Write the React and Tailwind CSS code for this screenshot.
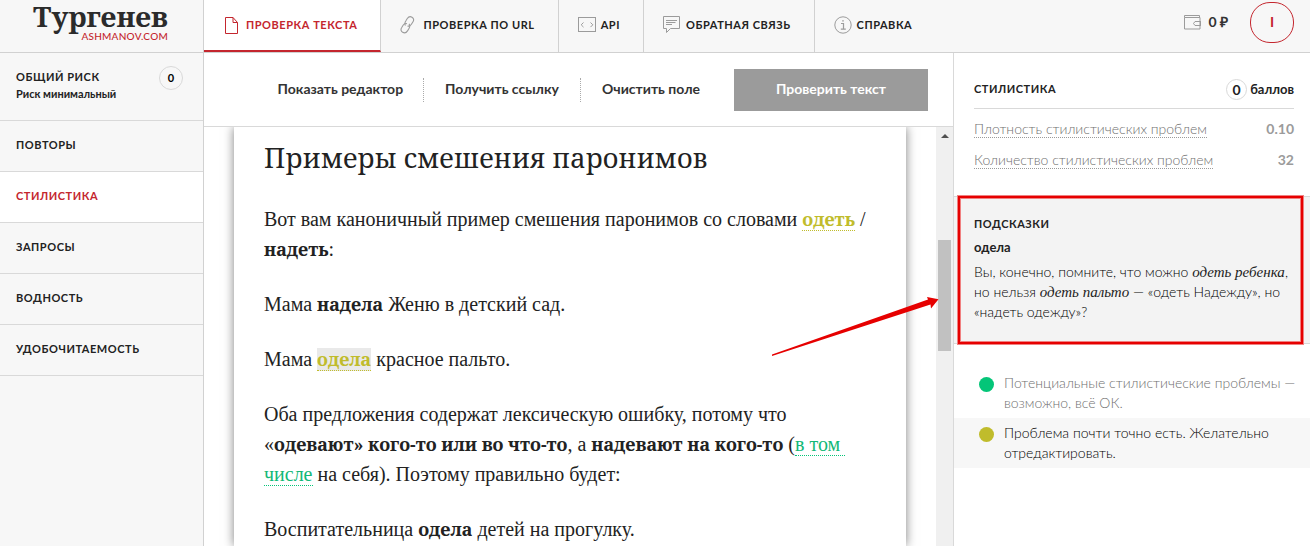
const NAV = [
  { label: 'Проверка текста', icon: FileIcon, active: true },
  { label: 'Проверка по URL', icon: LinkIcon },
  { label: 'API', icon: CodeIcon },
  { label: 'Обратная связь', icon: ChatIcon },
  { label: 'Справка', icon: InfoIcon },
]

const SECTIONS = ['Повторы', 'Стилистика', 'Запросы', 'Водность', 'Удобочитаемость']

const METRICS = [
  { label: 'Плотность стилистических проблем', value: '0.10' },
  { label: 'Количество стилистических проблем', value: '32' },
]

function FileIcon() {
  return (
    <svg width="15" height="17" viewBox="-2 0 15 17" fill="none" stroke="#c4262e">
      <path d="M.5.5h7.500l4.500 5v11H.5z" />
      <path d="M8 .5v5h4.500" />
    </svg>
  )
}

function LinkIcon() {
  return (
    <svg width="15" height="18" viewBox="0 0 15 18" fill="none" stroke="#9b9b9b" strokeWidth="1.100">
      <path d="M5.500 9.500C4.300 8 5 5.900 6.200 4.200l1.100-1.700C8.500.7 10.300.2 12 1.200s2.100 2.900 1 4.600L11.400 8.300c-1 1.600-2.400 2.100-3.900 1.600" />
      <path d="M9 7.800c1.300 1.600.8 3.500-.3 5.200l-1.200 1.900c-1.200 1.900-3.100 2.400-4.800 1.400s-2.200-2.900-1.100-4.600l1.500-2.500c1-1.500 2.400-2 3.900-1.500" />
    </svg>
  )
}

function CodeIcon() {
  return (
    <svg width="18" height="16" viewBox="0 0 18 16" fill="none" stroke="#9b9b9b">
      <rect x=".5" y=".5" width="17" height="14" />
      <path d="M5.500 5.500l-2.300 2.300 2.300 2.300M12.500 5.500l2.300 2.300-2.300 2.300" />
    </svg>
  )
}

function ChatIcon() {
  return (
    <svg width="17" height="18" viewBox="0 0 17 18" fill="none" stroke="#9b9b9b">
      <path d="M.5.5h16v12H7.500l-4 4v-4h-3z" />
      <path d="M3 4.500h11M3 6.500h9.500M3 8.500h6" />
    </svg>
  )
}

function InfoIcon() {
  return (
    <svg width="18" height="18" viewBox="0 0 18 18" fill="none" stroke="#9b9b9b">
      <circle cx="9" cy="9" r="8.200" />
      <path d="M7 7.500h2.500v5.500M6.800 13.200h5M8.200 4.800h1.600" strokeWidth="1.200" />
    </svg>
  )
}

function WalletIcon() {
  return (
    <svg width="18" height="15" viewBox="0 0 18 15" fill="none" stroke="#9b9b9b">
      <path d="M.5 2.500v11.500h15.500V2.500zM.5 2.500V.5h15v2M15.500 6.500h1v4h-1M16.500 6.500h-5.500l-1.500 2 1.500 2h5.500z" />
    </svg>
  )
}

function Header() {
  return (
    <header className="flex h-[53px] shrink-0 border-b border-[#d1d1d1] bg-[#f7f7f7]">
      <a href="#" className="flex w-[204px] shrink-0 flex-col items-end border-r border-[#d1d1d1] pr-[35px]">
        <span className="font-['Noto_Serif','Liberation_Serif',serif] text-[28px] leading-8 font-bold text-[#2b2b2b]">Тургенев</span>
        <span className="text-[10px] leading-2 font-medium tracking-wide text-[#c4262e]">ASHMANOV.COM</span>
      </a>
      <nav className="flex flex-1">
        {NAV.map(({ label, icon: Icon, active }) => (
          <a
            key={label}
            href="#"
            className={
              active
                ? 'flex items-center border-r border-b-2 border-r-[#d1d1d1] border-b-[#c4262e] bg-white pr-[23px] pl-[19px] text-[11px] font-bold tracking-wider text-[#c4262e] uppercase'
                : 'flex items-center border-r border-[#d1d1d1] pr-[23px] pb-0.5 pl-[19px] text-[11px] font-bold tracking-wider text-[#222] uppercase last:border-r-0'
            }
          >
            <span className="w-[23px] shrink-0"><Icon /></span>
            {label}
          </a>
        ))}
      </nav>
      <div className="flex items-center gap-[22px] pr-4">
        <a href="#" className="flex items-center gap-1.5 pb-2 text-sm font-bold text-[#333]">
          <WalletIcon />
          0 ₽
        </a>
        <button className="mb-2 h-[41px] w-11 rounded-[20px] border border-[#c4262e] text-sm font-bold text-[#c4262e]">I</button>
      </div>
    </header>
  )
}

function Sidebar() {
  return (
    <aside className="w-[204px] shrink-0 border-r border-[#d1d1d1] bg-[#f7f7f7]">
      <a href="#" className="flex h-[68px] justify-between border-b border-[#d9d9d9] pt-[13px] pr-5 pl-4">
        <span className="flex flex-col pt-[3px] text-[#222]">
          <span className="text-[11px] leading-4 font-bold tracking-wider uppercase">Общий риск</span>
          <span className="text-[11px] leading-[18px] font-bold">Риск минимальный</span>
        </span>
        <span className="flex size-6 items-center justify-center rounded-full border border-[#d9d9d9] text-[11px] font-bold">0</span>
      </a>
      {SECTIONS.map(name => (
        <a
          key={name}
          href="#"
          className={
            name === 'Стилистика'
              ? 'flex h-[51px] items-center border-b border-[#d9d9d9] bg-white pb-0.5 pl-4 text-[11px] font-bold tracking-wider text-[#c4262e] uppercase'
              : 'flex h-[51px] items-center border-b border-[#d9d9d9] pb-0.5 pl-4 text-[11px] font-bold tracking-wider text-[#222] uppercase'
          }
        >
          {name}
        </a>
      ))}
    </aside>
  )
}

function Toolbar() {
  return (
    <div className="flex h-[74px] shrink-0 items-center justify-end border-b border-[#d9d9d9] pr-[25px] text-sm font-bold text-[#333]">
      <button className="h-6 pr-5 pb-0.5">Показать редактор</button>
      <button className="h-6 border-l border-dotted border-[#aaa] px-[21px] pb-0.5">Получить ссылку</button>
      <button className="h-6 border-l border-dotted border-[#aaa] px-[21px] pb-0.5">Очистить поле</button>
      <button className="ml-[13px] h-[42px] w-[194px] bg-[#9b9b9b] pb-0.5 text-white">Проверить текст</button>
    </div>
  )
}

function Strong({ children }) {
  return <b className="font-['Noto_Serif','Liberation_Serif',serif] text-lg leading-none">{children}</b>
}

function Issue({ children, selected }) {
  return (
    <span
      className={
        selected
          ? 'border-b border-dotted border-[#c0bc2c] bg-[#e9e9e9] text-[#c0bc2c]'
          : 'border-b border-dotted border-[#c0bc2c] text-[#c0bc2c]'
      }
    >
      <Strong>{children}</Strong>
    </span>
  )
}

function Article() {
  return (
    <article className="mx-[30px] h-full flex-1 space-y-[25px] bg-white px-[30px] pt-4 font-['Liberation_Serif',serif] text-[20px] leading-[30px] text-[#222] shadow-[0_0_10px_rgba(0,0,0,0.5)]">
      <h1 className="mb-[31px] font-['Noto_Serif','Liberation_Serif',serif] text-[27px]">Примеры смешения паронимов</h1>
      <p>
        Вот вам каноничный пример смешения паронимов со словами <Issue>одеть</Issue> /<br />
        <Strong>надеть</Strong>:
      </p>
      <p>Мама <Strong>надела</Strong> Женю в детский сад.</p>
      <p>Мама <Issue selected>одела</Issue> красное пальто.</p>
      <p>
        Оба предложения содержат лексическую ошибку, потому что<br />
        «<Strong>одевают» кого-то или во что-то</Strong>, а <Strong>надевают на кого-то</Strong> (
        <span className="border-b border-dotted border-[#04c578] text-[#12b877]">в том&nbsp;<br />числе</span> на себя). Поэтому правильно будет:
      </p>
      <p>Воспитательница <Strong>одела</Strong> детей на прогулку.</p>
    </article>
  )
}

function Scrollbar() {
  return (
    <div className="flex w-[17px] shrink-0 flex-col items-center bg-[#f0f0f0] pt-[7px]">
      <svg width="8" height="4" viewBox="0 0 8 4" fill="#505050"><path d="M0 4 4 0l4 4z" /></svg>
      <div className="mt-[102px] h-[111px] w-[13px] bg-[#c1c1c1]" />
    </div>
  )
}

function Arrow() {
  return (
    <svg width="168" height="62" viewBox="0 0 168 62" fill="#e60000" className="absolute top-[168px] right-[14px]">
      <path d="M1 59.500 157 4.500 156 2l11.500 2.200-7.500 9.300-.5-4L1 61z" />
    </svg>
  )
}

function Example({ children }) {
  return <i className="font-['Liberation_Serif',serif] text-[15px] font-normal text-[#222]">{children}</i>
}

function Results() {
  return (
    <aside className="w-[357px] shrink-0 border-l border-[#d9d9d9] text-sm text-[#333]">
      <section className="h-[143px] pt-5 pr-4 pl-5">
        <div className="flex h-9 items-start justify-between border-b border-[#d9d9d9] pt-1.5">
          <h2 className="text-[11px] leading-5 font-bold tracking-wider text-[#222] uppercase">Стилистика</h2>
          <div className="flex items-center gap-[3px] text-[13px] font-bold text-[#222]">
            <span className="flex size-[21px] items-center justify-center rounded-full border border-[#d9d9d9] text-sm">0</span>
            баллов
          </div>
        </div>
        <dl className="mt-2.5 space-y-[11px] leading-5 text-[#707070]">
          {METRICS.map(m => (
            <div key={m.label} className="flex justify-between">
              <dt><a href="#" className="border-b border-dotted border-[#9b9b9b] font-light">{m.label}</a></dt>
              <dd className="font-bold text-[#9b9b9b]">{m.value}</dd>
            </div>
          ))}
        </dl>
      </section>

      <section className="relative h-[148px] border-y border-[#d9d9d9] bg-[#f3f3f3] pt-[17px] pr-3 pl-5">
        <h2 className="text-[11px] leading-5 font-bold tracking-wider text-[#222] uppercase">Подсказки</h2>
        <h3 className="mt-[3px] mb-[5px] text-[13px] leading-5 font-bold text-[#222]">одела</h3>
        <p className="leading-5 font-light text-black">
          Вы, конечно, помните, что можно <Example>одеть ребенка</Example>,<br />
          но нельзя <Example>одеть пальто</Example> — «одеть Надежду», но<br />
          «надеть одежду»?
        </p>
        <div className="pointer-events-none absolute -inset-y-px right-[7px] left-[4px] border-2 border-[#e60000] shadow-[0_0_0_1px_#f08080,inset_0_0_0_1px_#f08080]" />
      </section>

      <ul className="pt-6 leading-5 font-light">
        <li className="flex gap-[10px] py-[5px] pr-2 pl-[25px] text-[#707070]">
          <span className="mt-1 size-[15px] shrink-0 rounded-full bg-[#04c578]" />
          <span>Потенциальные стилистические проблемы —<br />возможно, всё ОК.</span>
        </li>
        <li className="flex gap-[10px] bg-[#f7f7f7] py-[5px] pr-2 pl-[25px] text-black">
          <span className="mt-1 size-[15px] shrink-0 rounded-full bg-[#c0bc2c]" />
          <span>Проблема почти точно есть. Желательно<br />отредактировать.</span>
        </li>
      </ul>
    </aside>
  )
}

export default function App() {
  return (
    <div className="flex h-screen flex-col overflow-hidden bg-white font-['Lato','Open_Sans',sans-serif]">
      <Header />
      <div className="flex min-h-0 flex-1">
        <Sidebar />
        <main className="flex min-w-0 flex-1 flex-col">
          <Toolbar />
          <div className="relative flex min-h-0 flex-1 overflow-hidden">
            <Article />
            <Scrollbar />
            <Arrow />
          </div>
        </main>
        <Results />
      </div>
    </div>
  )
}
